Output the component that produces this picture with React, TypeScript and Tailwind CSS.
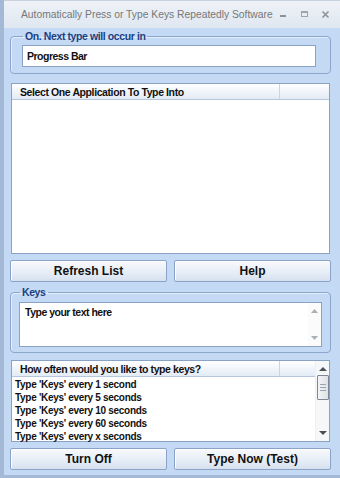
import React from "react";

const font = { fontFamily: '"Liberation Sans", Arial, sans-serif' };

function GroupBox({ label, className, children }: { label: string; className?: string; children: React.ReactNode }) {
  return (
    <fieldset className={`border border-[#8aa6cc] rounded-[4px] shadow-[inset_1px_1px_0_#e2eefc] ${className ?? ""}`}>
      <legend className="ml-[1px] px-[2px] text-[10.5px] leading-[12px] font-bold tracking-[-0.4px] text-[#1d3f7e]">{label}</legend>
      {children}
    </fieldset>
  );
}

function Button({ children }: { children: React.ReactNode }) {
  return (
    <button className="flex-1 h-[22px] border border-[#8ba3c6] rounded-[2px] bg-gradient-to-b from-[#f7f9fc] via-[#e9eff7] to-[#d6e1ef] text-[12px] font-bold text-[#111] leading-none shadow-[inset_1px_1px_0_#ffffff]">
      {children}
    </button>
  );
}

function ListHeader({ label }: { label: string }) {
  return (
    <div className="h-[16px] flex border-b border-[#b6c6dc] bg-gradient-to-b from-[#ffffff] to-[#e3ebf5]">
      <div className="w-[268px] border-r border-[#c9d5e4] pl-[8px] text-[10.5px] font-bold tracking-[-0.4px] leading-[16px] text-[#111]">{label}</div>
      <div className="flex-1" />
    </div>
  );
}

const intervals = [
  "Type 'Keys' every 1 second",
  "Type 'Keys' every 5 seconds",
  "Type 'Keys' every 10 seconds",
  "Type 'Keys' every 60 seconds",
  "Type 'Keys' every x seconds",
];

export default function App() {
  return (
    <div style={font} className="w-[340px] h-[478px] flex flex-col bg-[#c4daf4] border-l-[4px] border-b-[3px] border-[#a3b9d6] overflow-hidden">
      {/* Title bar */}
      <div className="h-[28px] shrink-0 flex items-center bg-gradient-to-b from-[#eef2f7] to-[#dfe7f1] border-t border-[#c8d2de] -ml-[4px] pl-[4px]">
        <div className="flex-1 pl-[17px] text-[10.3px] text-[#777] whitespace-nowrap">Automatically Press or Type Keys Repeatedly Software</div>
        <div className="flex items-center gap-[12px] pr-[10px] text-[#8a8f96]">
          <svg width="9" height="9" viewBox="0 0 9 9"><rect x="1" y="5" width="6" height="2" fill="#8d9299" /></svg>
          <svg width="9" height="9" viewBox="0 0 9 9"><rect x="1.5" y="1.5" width="6" height="5" fill="none" stroke="#a0a5ac" /><rect x="1.5" y="1.5" width="6" height="1.5" fill="#a0a5ac" /></svg>
          <svg width="9" height="9" viewBox="0 0 9 9"><path d="M1.5 1.5 L7.5 7.5 M7.5 1.5 L1.5 7.5" stroke="#8d9299" strokeWidth="1.6" /></svg>
        </div>
      </div>

      <div className="flex-1 flex flex-col pl-[6px] pr-[9px]">
        <GroupBox label="On. Next type will occur in" className="mt-[2px] pl-[11px] pr-[14px] pb-[6px]">
          <div className="mt-[3px] h-[22px] bg-white border border-[#8aa3c4] pl-[4px] text-[10.5px] font-bold tracking-[-0.5px] leading-[20px] text-[#111]">
            Progress Bar
          </div>
        </GroupBox>

        <div className="mt-[9px] h-[171px] ml-[1px] mr-[1px] bg-white border border-[#8aa3c4] flex flex-col">
          <ListHeader label="Select One Application To Type Into" />
        </div>

        <div className="mt-[6px] flex gap-[7px]">
          <Button>Refresh List</Button>
          <Button>Help</Button>
        </div>

        <GroupBox label="Keys" className="mt-[4px] pl-[8px] pr-[8px] pb-[5px]">
          <div className="mt-[4px] h-[45px] bg-white border border-[#8aa3c4] flex">
            <div className="flex-1 pl-[5px] pt-[3px] text-[10.5px] font-bold tracking-[-0.5px] leading-[12px] text-[#111]">Type your text here</div>
            <div className="w-[13px] flex flex-col justify-between items-center py-[6px] bg-[#fbfbfb]">
              <svg width="7" height="4" viewBox="0 0 7 4"><path d="M0 4 L3.5 0 L7 4 Z" fill="#a9b0b8" /></svg>
              <svg width="7" height="4" viewBox="0 0 7 4"><path d="M0 0 L3.5 4 L7 0 Z" fill="#a9b0b8" /></svg>
            </div>
          </div>
        </GroupBox>

        <div className="mt-[7px] h-[82px] ml-[1px] mr-[1px] bg-white border border-[#8aa3c4] flex">
          <div className="flex-1 flex flex-col min-w-0">
            <div className="h-[16px] flex border-b border-[#b6c6dc] bg-gradient-to-b from-[#ffffff] to-[#e3ebf5]">
              <div className="w-[268px] border-r border-[#c9d5e4] pl-[8px] text-[10.5px] font-bold tracking-[-0.4px] leading-[16px] text-[#111]">How often would you like to type keys?</div>
              <div className="flex-1" />
            </div>
            <div className="pl-[3px] pt-[1px]">
              {intervals.map((t) => (
                <div key={t} className="h-[13px] text-[10px] font-bold tracking-[-0.3px] leading-[13px] text-[#111] whitespace-nowrap">{t}</div>
              ))}
            </div>
          </div>
          <div className="w-[14px] flex flex-col items-center bg-[#f6f7f9] border-l border-[#eef0f3]">
            <svg className="mt-[6px]" width="8" height="4" viewBox="0 0 8 4"><path d="M0 4 L4 0 L8 4 Z" fill="#4a5058" /></svg>
            <div className="mt-[4px] w-[12px] h-[25px] border border-[#7d8896] rounded-[1px] bg-gradient-to-r from-[#f3f4f6] to-[#dde1e6] flex flex-col items-center justify-center gap-[2px]">
              <div className="w-[6px] h-px bg-[#9aa3ad]" />
              <div className="w-[6px] h-px bg-[#9aa3ad]" />
              <div className="w-[6px] h-px bg-[#9aa3ad]" />
            </div>
            <div className="flex-1" />
            <svg className="mb-[6px]" width="8" height="4" viewBox="0 0 8 4"><path d="M0 0 L4 4 L8 0 Z" fill="#4a5058" /></svg>
          </div>
        </div>

        <div className="mt-[6px] flex gap-[7px]">
          <Button>Turn Off</Button>
          <Button>Type Now (Test)</Button>
        </div>
      </div>
    </div>
  );
}
